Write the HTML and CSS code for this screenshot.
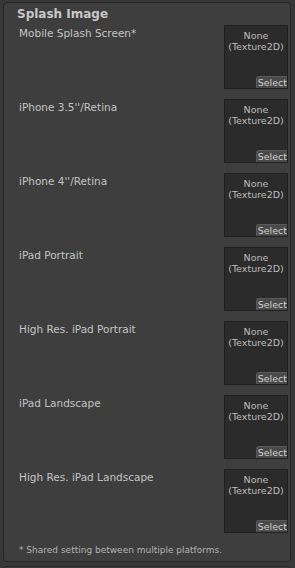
FILE: index.html
```html
<!DOCTYPE html>
<html lang="en">
<head>
    <meta charset="UTF-8">
    <meta name="viewport" content="width=device-width, initial-scale=1.0">
    <title>Splash Image</title>
    <link rel="stylesheet" href="styles.css">
</head>
<body>
    <div class="panel">
        <h2 class="panel-title">Splash Image</h2>
        <div class="splash-row">
            <span class="label">Mobile Splash Screen*</span>
            <div class="texture-field">
                <span class="texture-name">None<br>(Texture2D)</span>
                <button class="select-btn">Select</button>
            </div>
        </div>
        <div class="splash-row">
            <span class="label">iPhone 3.5''/Retina</span>
            <div class="texture-field">
                <span class="texture-name">None<br>(Texture2D)</span>
                <button class="select-btn">Select</button>
            </div>
        </div>
        <div class="splash-row">
            <span class="label">iPhone 4''/Retina</span>
            <div class="texture-field">
                <span class="texture-name">None<br>(Texture2D)</span>
                <button class="select-btn">Select</button>
            </div>
        </div>
        <div class="splash-row">
            <span class="label">iPad Portrait</span>
            <div class="texture-field">
                <span class="texture-name">None<br>(Texture2D)</span>
                <button class="select-btn">Select</button>
            </div>
        </div>
        <div class="splash-row">
            <span class="label">High Res. iPad Portrait</span>
            <div class="texture-field">
                <span class="texture-name">None<br>(Texture2D)</span>
                <button class="select-btn">Select</button>
            </div>
        </div>
        <div class="splash-row">
            <span class="label">iPad Landscape</span>
            <div class="texture-field">
                <span class="texture-name">None<br>(Texture2D)</span>
                <button class="select-btn">Select</button>
            </div>
        </div>
        <div class="splash-row">
            <span class="label">High Res. iPad Landscape</span>
            <div class="texture-field">
                <span class="texture-name">None<br>(Texture2D)</span>
                <button class="select-btn">Select</button>
            </div>
        </div>
        <p class="note">* Shared setting between multiple platforms.</p>
    </div>
    <div class="panel panel-next"></div>
</body>
</html>
```

FILE: styles.css
```css
/* General Reset */
* {
    margin: 0;
    padding: 0;
    box-sizing: border-box;
}

body {
    font-family: "DejaVu Sans", sans-serif;
    font-size: 10.5px;
    line-height: 14px;
    background-color: #383838;
    color: #c4c4c4;
    padding: 2px 4px 0 3px;
}

.panel {
    background-color: #3e3e3e;
    border: 1px solid #262626;
    border-radius: 4px;
    padding: 4px 2px 4px 15px;
    height: 560px;
}

.panel-next {
    height: 20px;
    margin-top: 4px;
}

.panel-title {
    font-size: 12px;
    font-weight: bold;
    margin-left: -2px;
    margin-bottom: 4px;
    color: #c8c8c8;
}

.splash-row {
    display: flex;
    justify-content: space-between;
    height: 64px;
    margin-bottom: 10px;
}

.label {
    padding-top: 1px;
}

.texture-field {
    position: relative;
    width: 64px;
    height: 64px;
    background-color: #2b2b2b;
    border: 1px solid #202020;
    text-align: center;
    font-size: 9.5px;
    line-height: 11px;
    padding-top: 4px;
    color: #bdbdbd;
}

.select-btn {
    position: absolute;
    right: 0;
    bottom: 0;
    width: 31px;
    height: 12px;
    padding: 0;
    background-color: #4a4a4a;
    border: none;
    border-top: 1px solid #5a5a5a;
    border-left: 1px solid #5a5a5a;
    border-top-left-radius: 3px;
    color: #cfcfcf;
    font-family: "DejaVu Sans", sans-serif;
    font-size: 9.5px;
    line-height: 11px;
    text-align: right;
    white-space: nowrap;
    overflow: hidden;
}

.note {
    font-size: 9px;
    margin-top: 2px;
    color: #b4b4b4;
}
```
